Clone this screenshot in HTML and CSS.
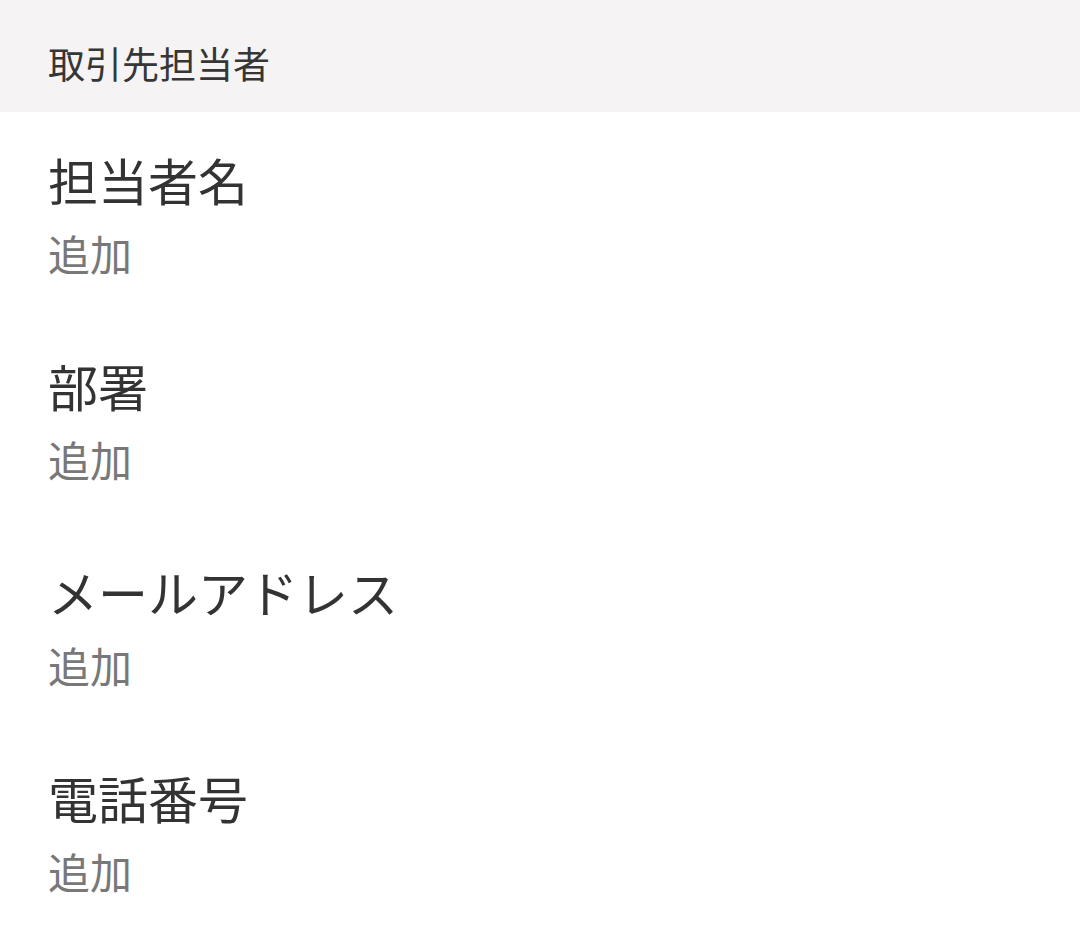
FILE: index.html
```html
<!DOCTYPE html>
<html lang="ja">
<head>
<meta charset="utf-8">
<link rel="stylesheet" href="styles.css">
</head>
<body>
<div class="section-header">取引先担当者</div>
<div class="list">
  <div class="item"><div class="label">担当者名</div><div class="value">追加</div></div>
  <div class="item"><div class="label">部署</div><div class="value">追加</div></div>
  <div class="item"><div class="label">メールアドレス</div><div class="value">追加</div></div>
  <div class="item"><div class="label">電話番号</div><div class="value">追加</div></div>
</div>
</body>
</html>
```
FILE: styles.css
```css
html, body {
  margin: 0;
  padding: 0;
  background: #ffffff;
}
body {
  font-family: "Noto Sans CJK JP", "Noto Sans", sans-serif;
  width: 1080px;
  height: 935px;
  overflow: hidden;
}
.section-header {
  background: #f5f3f4;
  color: #363636;
  font-size: 37px;
  line-height: 44px;
  height: 44px;
  padding: 41px 48px 27px;
}
.item {
  padding: 37px 48px 40px;
}
.label {
  color: #333333;
  font-size: 50px;
  line-height: 60px;
}
.value {
  color: #787878;
  font-size: 42px;
  line-height: 50px;
  margin-top: 19px;
}
```
